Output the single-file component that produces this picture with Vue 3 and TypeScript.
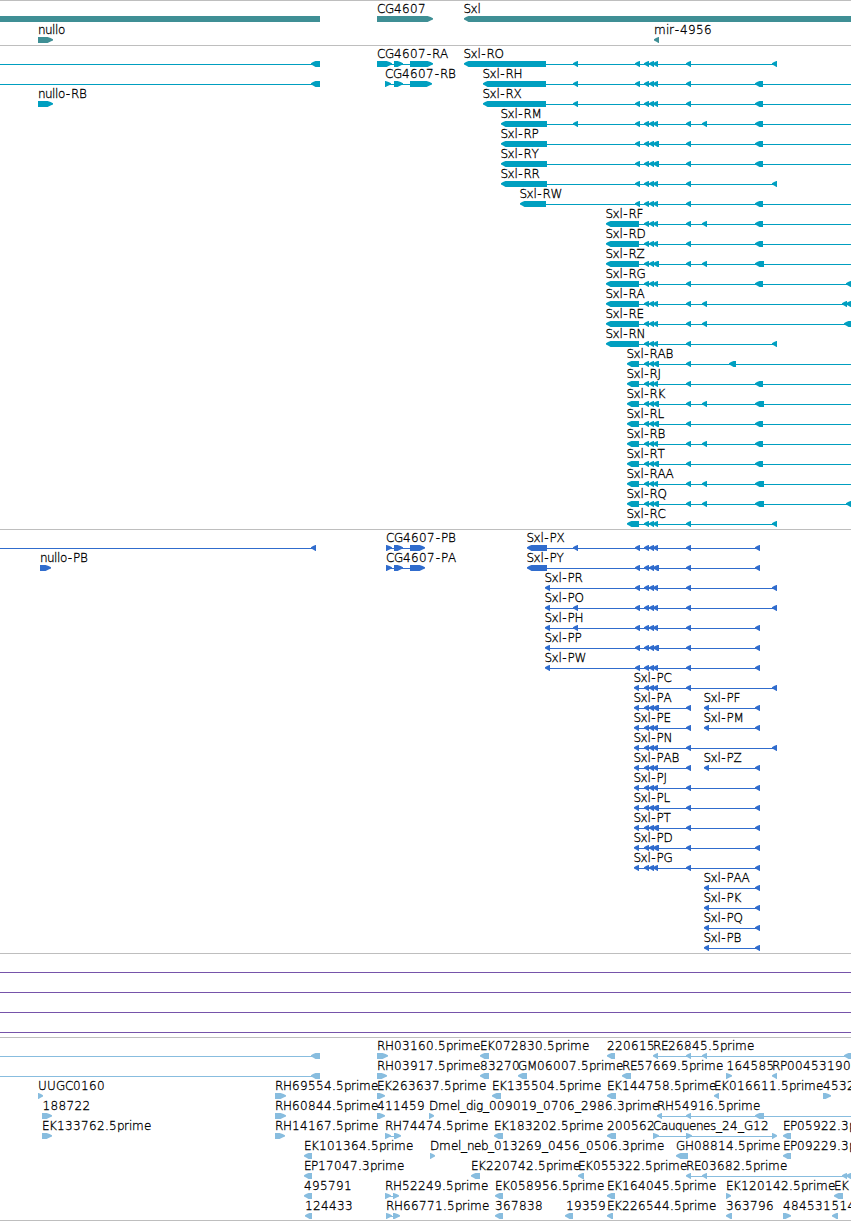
<script setup lang="ts">
type Span = [number, number]
interface Feature {
  row: number
  name: string
  x: number
  exons: Span[]
  dir: 'l' | 'r'
  line?: Span
}
interface Track {
  id: string
  top: number
  height: number
  first: number
  features: Feature[]
}

const WIDTH = 851

// Advance width of each label glyph, in whole pixels
const advances: Record<string, number> = {
  C: 8, G: 9, S: 7, R: 8, A: 8, B: 8, H: 9, O: 9, X: 8, M: 10, P: 7, Y: 7, W: 11, F: 6,
  D: 9, Z: 8, J: 4, K: 8, L: 6, T: 7, Q: 9, E: 7, U: 9,
  x: 7, l: 3, i: 3, r: 5, m: 12, s: 6, '-': 6, '.': 4, _: 6, n: 7, u: 7, o: 7,
}
function glyphXs(name: string, x: number): string {
  let at = x + 0.4
  return [...name].map((c) => {
    const here = c === '-' ? at + 0.8 : at
    at += advances[c] ?? (/\d/.test(c) ? 8 : 7)
    return here.toFixed(1)
  }).join(' ')
}

function arrow([a, b]: Span, y: number, dir: 'l' | 'r'): string {
  const head = Math.min(dir === 'l' ? 5 : 6, b - a)
  return dir === 'l'
    ? `M${a} ${y + 2.3}L${a + head * 0.4} ${y + 0.9}L${a + head * 0.9} ${y}H${b}V${y + 6}H${a + head * 0.9}L${a + head * 0.4} ${y + 4.6}L${a} ${y + 3.5}Z`
    : `M${a} ${y}H${b - head * 0.9}L${b - head * 0.4} ${y + 1.1}L${b} ${y + 2.3}V${y + 3.5}L${b - head * 0.4} ${y + 4.5}L${b - head * 0.9} ${y + 6}H${a}Z`
}

// Exons shared by the Sxl isoforms
const shared: Record<string, Span[]> = {
  a: [[573, 578]],
  p: [[635, 640]],
  c: [[644, 649], [649, 654], [653, 658]],
  C: [[644, 649], [649, 654], [653, 659]],
  d: [[686, 691]],
  e: [[702, 707]],
  f: [[755, 763]],
  F: [[755, 764]],
  g: [[755, 760]],
  h: [[772, 777]],
  i: [[729, 736]],
  j: [[846, 851]],
  k: [[842, 847], [846, 851]],
  m: [[844, 851]],
}
function sxl(row: number, suffix: string, start: number, end: number, codes: string, stop = WIDTH): Feature {
  return {
    row, name: `Sxl-${suffix}`, x: start - 1, dir: 'l', line: [start + 2, stop],
    exons: [[start, end], ...[...codes].flatMap((c) => shared[c])],
  }
}
function f(row: number, name: string, x: number, dir: 'l' | 'r', exons: Span[], line?: Span): Feature {
  return { row, name, x, dir, exons, line }
}

const tracks: Track[] = [
  {
    id: 'gene', top: 0, height: 45, first: 16,
    features: [
      { row: 0, name: '', x: 0, dir: 'l', exons: [[-10, 320]] },
      f(0, 'CG4607', 376.5, 'r', [[377, 433]]),
      f(0, 'Sxl', 463, 'l', [[464, 860]]),
      f(1.05, 'nullo', 37.5, 'r', [[38, 53]]),
      f(1.05, 'mir-4956', 653.5, 'l', [[654, 659]]),
    ],
  },
  {
    id: 'transcript', top: 45, height: 484, first: 61,
    features: [
      f(0, '', 0, 'l', [[311, 320]], [0, 313]),
      f(1, '', 0, 'l', [[311, 320]], [0, 313]),
      f(2, 'nullo-RB', 37.5, 'r', [[38, 53]]),
      f(0, 'CG4607-RA', 376.5, 'r', [[377, 392], [394, 403], [410, 433]], [380, 430]),
      f(1, 'CG4607-RB', 384.5, 'r', [[385, 391], [394, 403], [410, 432]], [387, 430]),
      sxl(0, 'RO', 464, 546, 'apcdh', 777),
      sxl(1, 'RH', 483, 546, 'apcdf'),
      sxl(2, 'RX', 483, 546, 'apcdf'),
      sxl(3, 'RM', 501, 547, 'apcdef'),
      sxl(4, 'RP', 501, 547, 'pCdf'),
      sxl(5, 'RY', 501, 547, 'pCdf'),
      sxl(6, 'RR', 501, 547, 'pcdh', 777),
      sxl(7, 'RW', 520, 546, 'pcdf'),
      sxl(8, 'RF', 606, 639, 'cdef'),
      sxl(9, 'RD', 606, 639, 'cdf'),
      sxl(10, 'RZ', 606, 639, 'CdeF'),
      sxl(11, 'RG', 606, 639, 'cdfj'),
      sxl(12, 'RA', 606, 639, 'cdek'),
      sxl(13, 'RE', 606, 639, 'cdem'),
      sxl(14, 'RN', 606, 639, 'cdh', 777),
      sxl(15, 'RAB', 627, 639, 'Cdi'),
      sxl(16, 'RJ', 627, 639, 'cdf'),
      sxl(17, 'RK', 627, 639, 'CdeF'),
      sxl(18, 'RL', 627, 639, 'Cdf'),
      sxl(19, 'RB', 627, 639, 'cdef'),
      sxl(20, 'RT', 627, 639, 'Cdf'),
      sxl(21, 'RAA', 627, 639, 'cdeF'),
      sxl(22, 'RQ', 627, 639, 'CdeFj'),
      sxl(23, 'RC', 627, 639, 'cdh', 777),
    ],
  },
  {
    id: 'protein', top: 529, height: 424, first: 545,
    features: [
      f(0, '', 0, 'l', [[311, 316]], [0, 313]),
      f(1, 'nullo-PB', 39.5, 'r', [[40, 51]]),
      f(0, 'CG4607-PB', 385.5, 'r', [[386, 392], [394, 403], [410, 425]], [388, 422]),
      f(1, 'CG4607-PA', 385.5, 'r', [[386, 392], [394, 403], [410, 425]], [388, 422]),
      sxl(0, 'PX', 527, 547, 'apcdg', 760),
      sxl(1, 'PY', 527, 547, 'pCdg', 760),
      sxl(2, 'PR', 545, 550, 'pcdh', 777),
      sxl(3, 'PO', 545, 550, 'apcdh', 777),
      sxl(4, 'PH', 545, 550, 'apcdg', 760),
      sxl(5, 'PP', 545, 550, 'pCdg', 760),
      sxl(6, 'PW', 545, 550, 'pcdg', 760),
      sxl(7, 'PC', 634, 639, 'cdh', 777),
      sxl(8, 'PA', 634, 639, 'Cd', 691),
      sxl(9, 'PE', 634, 639, 'cd', 691),
      sxl(10, 'PN', 634, 639, 'cdh', 777),
      sxl(11, 'PAB', 634, 639, 'cd', 691),
      sxl(12, 'PJ', 634, 639, 'cdg', 760),
      sxl(13, 'PL', 634, 639, 'Cdg', 760),
      sxl(14, 'PT', 634, 639, 'Cdg', 760),
      sxl(15, 'PD', 634, 639, 'Cdg', 760),
      sxl(16, 'PG', 634, 639, 'cdg', 760),
      sxl(8, 'PF', 704, 709, 'g', 760),
      sxl(9, 'PM', 704, 709, 'g', 760),
      sxl(11, 'PZ', 704, 709, 'g', 760),
      sxl(17, 'PAA', 704, 709, 'g', 760),
      sxl(18, 'PK', 704, 709, 'g', 760),
      sxl(19, 'PQ', 704, 709, 'g', 760),
      sxl(20, 'PB', 704, 709, 'g', 760),
    ],
  },
  { id: 'span', top: 953, height: 84, first: 969, features: [0, 1, 2, 3].map((r) => f(r, '', 0, 'l', [], [0, WIDTH])) },
  {
    id: 'est', top: 1037, height: 183, first: 1053,
    features: [
      f(0, '', 0, 'l', [[311, 320]], [0, 313]),
      f(0, 'RH03160.5prime', 376.5, 'r', [[377, 388]]),
      f(0, 'EK072830.5prime', 479.5, 'l', [[480, 489]]),
      f(0, '220615', 606.5, 'l', [[607, 615]]),
      f(0, 'RE26845.5prime', 652.5, 'l', [[653, 658], [686, 691], [702, 707], [844, 851]], [655, 851]),
      f(1, '', 0, 'l', [[311, 320]], [0, 313]),
      f(1, 'RH03917.5prime', 376.5, 'r', [[377, 387]]),
      f(1, '83270', 479.5, 'l', [[480, 489]]),
      f(1, 'GM06007.5prime', 517.5, 'l', [[518, 527]]),
      f(1, 'RE57669.5prime', 621.5, 'l', [[622, 631]]),
      f(1, '164585', 726, 'r', [[726, 732]]),
      f(1, 'RP00453190', 771.5, 'l', [[772, 777]]),
      f(2, 'UUGC0160', 37.5, 'r', [[38, 43]]),
      f(2, 'RH69554.5prime', 274.5, 'r', [[275, 286]]),
      f(2, 'EK263637.5prime', 376.5, 'r', [[377, 385]]),
      f(2, 'EK135504.5prime', 491.5, 'l', [[492, 501]]),
      f(2, 'EK144758.5prime', 606.5, 'l', [[607, 616]]),
      f(2, 'EK016611.5prime', 713.5, 'l', [[714, 719]]),
      f(2, '4532', 822.5, 'r', [[823, 831]]),
      f(3, '188722', 42, 'r', [[42, 52]]),
      f(3, 'RH60844.5prime', 274.5, 'r', [[275, 286]]),
      f(3, '411459', 376.5, 'r', [[377, 385]]),
      f(3, 'Dmel_dig_009019_0706_2986.3prime', 428.5, 'r', [[429, 434]]),
      f(3, 'RH54916.5prime', 656.5, 'l', [[657, 662], [686, 691], [755, 764]], [659, 851]),
      f(4, 'EK133762.5prime', 41.5, 'r', [[42, 52]]),
      f(4, 'RH14167.5prime', 274.5, 'r', [[275, 285]]),
      f(4, 'RH74474.5prime', 384.5, 'r', [[385, 391], [394, 401]], [387, 399]),
      f(4, 'EK183202.5prime', 493.5, 'l', [[494, 503]]),
      f(4, '200562', 606.5, 'l', [[607, 616]]),
      f(4, 'Cauquenes_24_G12', 652.5, 'r', [[653, 659], [686, 692], [772, 777]], [655, 775]),
      f(4, 'EP05922.3prime', 782.5, 'l', [[783, 791]]),
      f(5, 'EK101364.5prime', 303.5, 'l', [[304, 312]]),
      f(5, 'Dmel_neb_013269_0456_0506.3prime', 429.5, 'r', [[430, 435]]),
      f(5, 'GH08814.5prime', 675.5, 'l', [[676, 688]]),
      f(5, 'EP09229.3prime', 782.5, 'l', [[783, 791]]),
      f(6, 'EP17047.3prime', 303.5, 'l', [[304, 312]]),
      f(6, 'EK220742.5prime', 470.5, 'l', [[471, 480]]),
      f(6, 'EK055322.5prime', 577.5, 'l', [[578, 584]]),
      f(6, 'RE03682.5prime', 685.5, 'l', [[686, 691], [702, 707], [842, 847], [846, 851]], [688, 851]),
      f(7, '495791', 303.5, 'l', [[304, 312]]),
      f(7, 'RH52249.5prime', 384.5, 'r', [[385, 391], [393, 399]], [387, 398]),
      f(7, 'EK058956.5prime', 494.5, 'l', [[495, 503]]),
      f(7, 'EK164045.5prime', 606.5, 'l', [[607, 615]]),
      f(7, 'EK120142.5prime', 725.5, 'r', [[726, 731]]),
      f(7, 'EK', 833.5, 'l', [[834, 843]]),
      f(8, '124433', 304.5, 'l', [[305, 312]]),
      f(8, 'RH66771.5prime', 385.5, 'r', [[386, 392], [393, 400]], [388, 398]),
      f(8, '367838', 494.5, 'l', [[495, 503]]),
      f(8, '19359', 565.5, 'l', [[565, 573]]),
      f(8, 'EK226544.5prime', 606.5, 'l', [[607, 613]]),
      f(8, '363796', 725.5, 'l', [[726, 732]]),
      f(8, '484531', 782.5, 'r', [[783, 791]]),
      f(8, '514', 831, 'l', [[832, 838]]),
    ],
  },
]
const rowY = (t: Track, feature: Feature) => t.first + feature.row * 20
</script>

<template>
  <main class="browser">
    <section v-for="t in tracks" :key="t.id" class="track" :class="t.id">
      <svg :width="WIDTH" :height="t.height - 1" :viewBox="`0 ${t.top + 1} ${WIDTH} ${t.height - 1}`">
        <g v-for="(feat, i) in t.features" :key="i">
          <rect
            v-if="feat.line" class="mark" :x="feat.line[0]" :y="rowY(t, feat) + 3"
            :width="feat.line[1] - feat.line[0]" height="1"
          />
          <path v-for="(exon, j) in feat.exons" :key="j" class="mark" :d="arrow(exon, rowY(t, feat), feat.dir)" />
          <text v-if="feat.name" :x="glyphXs(feat.name, feat.x)" :y="rowY(t, feat) - 3">{{ feat.name }}</text>
        </g>
      </svg>
    </section>
  </main>
</template>

<style>
body {
  margin: 0;
  background: #fff;
}
</style>

<style scoped>
.browser {
  display: flex;
  flex-direction: column;
  width: 851px;
  height: 1221px;
  box-sizing: border-box;
  overflow: hidden;
  border-bottom: 1px solid #bebebe;
  background: #fff;
}
.track {
  flex: none;
  border-top: 1px solid #bebebe;
}
.track svg {
  display: block;
  overflow: hidden;
}
.gene { color: #3f8f95; }
.transcript { color: #009fc0; }
.protein { color: #306ccd; }
.span { color: #7654aa; }
.est { color: #88bddf; }
.mark { fill: currentColor; }
text {
  font-family: "DejaVu Sans Light", "DejaVu Sans", sans-serif;
  font-weight: 200;
  font-size: 12px;
  fill: #000;
  stroke: #000;
  stroke-width: 0.3px;
}
</style>
